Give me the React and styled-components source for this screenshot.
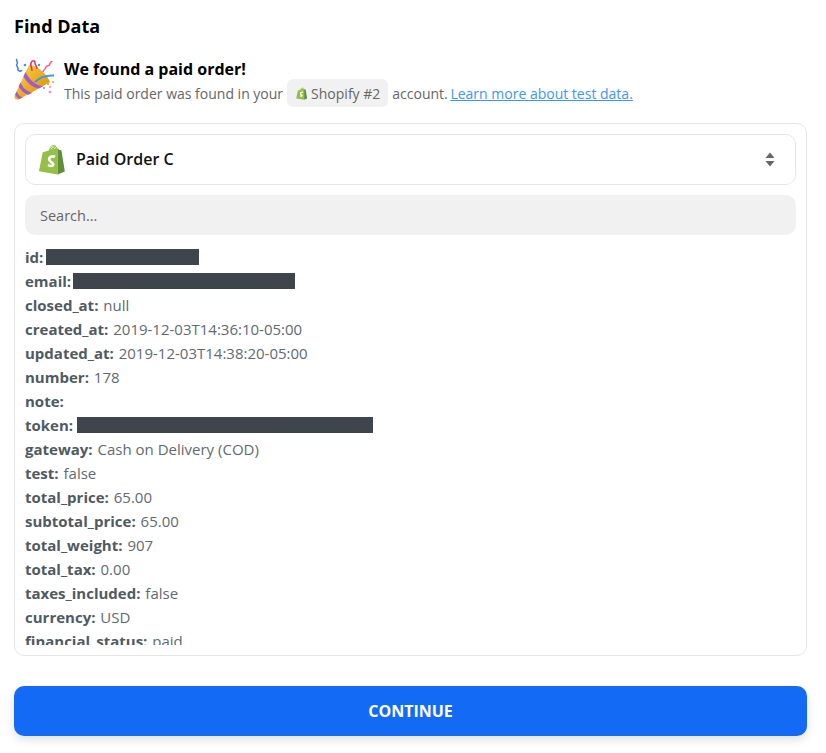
import * as React from "react";
import styled, { createGlobalStyle } from "styled-components";

const rows = [
  { key: "id", redact: 153, gap: 2 },
  { key: "email", redact: 222, gap: 1 },
  { key: "closed_at", value: "null" },
  { key: "created_at", value: "2019-12-03T14:36:10-05:00" },
  { key: "updated_at", value: "2019-12-03T14:38:20-05:00" },
  { key: "number", value: "178" },
  { key: "note", value: "" },
  { key: "token", redact: 296, gap: 3 },
  { key: "gateway", value: "Cash on Delivery (COD)" },
  { key: "test", value: "false" },
  { key: "total_price", value: "65.00" },
  { key: "subtotal_price", value: "65.00" },
  { key: "total_weight", value: "907" },
  { key: "total_tax", value: "0.00" },
  { key: "taxes_included", value: "false" },
  { key: "currency", value: "USD" },
  { key: "financial_status", value: "paid" },
];

function ShopifyBag({ size }) {
  return (
    <svg width={size} height={size} viewBox="0 0 28 32">
      <path d="M1 28 L5 8.5 C8 7.6 9.5 7 10.6 6.6 C11.6 3.4 13.6 1 16 1 C17.5 1 18.6 1.8 19.2 3.2 L20.5 4.6 L20.5 31.5 Z" fill="#95bf47" />
      <path d="M20.5 4.6 L22 6.2 L24.2 6.4 L27.8 28.4 L20.5 31.5 Z" fill="#5e8e3e" />
      <path d="M10.6 7 C11.4 4.2 13 2.4 15 2.2 M13.6 5.6 C14.4 3.8 15.6 2.8 17 3 M17 5 C17.6 4 18 3.6 18.8 3.8" fill="none" stroke="#fff" strokeWidth="0.9" />
      <path d="M17.6 13.2 C16 12.2 11.8 12.6 11.6 15.8 C11.4 18.8 16 18.8 15.8 21.2 C15.6 23 13 23.2 10.4 21.8" fill="none" stroke="#fff" strokeWidth="2.8" />
    </svg>
  );
}

function PartyPopper() {
  return (
    <svg width="42" height="42" viewBox="0 0 42 42">
      <defs>
        <linearGradient id="cone" x1="0" y1="0" x2="1" y2="1">
          <stop offset="0" stopColor="#ffd83f" />
          <stop offset="1" stopColor="#d5860a" />
        </linearGradient>
      </defs>
      <path d="M15 7 C22 6 34 17 36 24 C28 29 9 39 4.5 41.5 C1.5 42 0 40 0.6 37.5 Z" fill="url(#cone)" />
      <path d="M11.5 14 C15 21 21 27.5 29 28.3 L25 30.6 C18 29.5 12.5 24 9.4 18.5 Z" fill="#a35acb" />
      <path d="M6.5 24.5 C9 30 13 33.8 18.5 34.6 L14.5 36.8 C10 35.5 6.5 32 4.6 28.5 Z" fill="#a35acb" />
      <path d="M2.5 33.5 C4 36.5 6 38.6 8.6 39.6 L5.6 41 C3.6 40 2 38.2 1.2 36.4 Z" fill="#a35acb" />
      <path d="M21 24 C26 19 31 17 40 17.5" fill="none" stroke="#3c97e8" strokeWidth="2" />
      <path d="M18 13 C18 9 16 8 17 5 C18 2 21 2 21 5 C21 7 23 8 23 11" fill="none" stroke="#e8316f" strokeWidth="1.6" />
      <path d="M29 14 C29 11 32 12 32 9 C32 7 35 9 36 6 C36 4 38 4 38 3" fill="none" stroke="#f05a92" strokeWidth="1.5" />
      <path d="M3 1 C1 3 5 4 3 6 C1 8 5 9 4 11 C3 13 7 14 8 12" fill="none" stroke="#3c7fe8" strokeWidth="1.5" />
      <circle cx="11" cy="7" r="1.3" fill="#3c97e8" />
      <circle cx="25" cy="7" r="1.2" fill="#2f9ee8" />
      <circle cx="34" cy="26" r="1.2" fill="#f2a341" />
      <circle cx="39" cy="24" r="1.1" fill="#f2a341" />
      <circle cx="36" cy="29" r="1.2" fill="#f5a8c0" />
      <circle cx="36" cy="34" r="1.3" fill="#f58cb0" />
      <circle cx="30" cy="30" r="0.9" fill="#3c97e8" />
    </svg>
  );
}

function App() {
  return (
    <Page>
      <GlobalStyle />
      <Title>Find Data</Title>
      <Notice>
        <PopperSlot>
          <PartyPopper />
        </PopperSlot>
        <NoticeText>
          <NoticeHeading>We found a paid order!</NoticeHeading>
          <NoticeLine>
            This paid order was found in your
            <AccountPill>
              <ShopifyBag size={13} />
              Shopify #2
            </AccountPill>
            account. <LearnLink href="#">Learn more about test data.</LearnLink>
          </NoticeLine>
        </NoticeText>
      </Notice>
      <Card>
        <SelectBox>
          <ShopifyBag size={31} />
          <SelectLabel>Paid Order C</SelectLabel>
          <SortIcon width="10" height="15" viewBox="0 0 10 15">
            <path d="M5 0.5 L9.5 6 H0.5 Z M0.5 9 H9.5 L5 14.5 Z" fill="#666" />
          </SortIcon>
        </SelectBox>
        <SearchInput placeholder="Search..." />
        <Rows>
          {rows.map((row) => (
            <Row key={row.key}>
              <RowKey>{row.key}:</RowKey>
              {row.redact ? (
                <Redacted $width={row.redact} $gap={row.gap} />
              ) : (
                row.value && ` ${row.value}`
              )}
            </Row>
          ))}
        </Rows>
      </Card>
      <ContinueButton>CONTINUE</ContinueButton>
    </Page>
  );
}

const GlobalStyle = createGlobalStyle`
  html, body {
    margin: 0;
    background: #fff;
  }
  * {
    box-sizing: border-box;
  }
`;

const Page = styled.div`
  width: 826px;
  height: 753px;
  overflow: hidden;
  padding: 13px 19px 0 14px;
  font-family: "Open Sans", sans-serif;
`;

const Title = styled.h1`
  margin: 0;
  color: #000;
  font-size: 18px;
  font-weight: 700;
  line-height: 26px;
`;

const Notice = styled.div`
  display: flex;
  margin-top: 19px;
  height: 65px;
`;

const PopperSlot = styled.div`
  width: 50px;
  flex: none;
`;

const NoticeText = styled.div`
  padding-top: 1px;
`;

const NoticeHeading = styled.div`
  color: #000;
  font-size: 16px;
  font-weight: 700;
  line-height: 20px;
`;

const NoticeLine = styled.div`
  display: flex;
  align-items: center;
  height: 28px;
  color: #666;
  font-size: 14px;
  white-space: pre-wrap;
`;

const AccountPill = styled.span`
  display: inline-flex;
  align-items: center;
  gap: 3px;
  height: 28px;
  margin: 0 4px;
  padding: 0 8px;
  background: #f1f1f1;
  border-radius: 6px;
`;

const LearnLink = styled.a`
  margin-left: -1px;
  color: #3d95f5;
  text-decoration: underline;
`;

const Card = styled.div`
  display: flex;
  flex-direction: column;
  height: 533px;
  padding: 10px;
  border: 1px solid #e6e6e6;
  border-radius: 10px;
`;

const SelectBox = styled.div`
  display: flex;
  flex: none;
  align-items: center;
  height: 51px;
  padding: 0 20px 0 10px;
  border: 1px solid #e6e6e6;
  border-radius: 10px;
`;

const SelectLabel = styled.span`
  flex: 1;
  margin-left: 9px;
  padding-bottom: 2px;
  color: #111;
  font-size: 16px;
  font-weight: 600;
`;

const SortIcon = styled.svg`
  flex: none;
`;

const SearchInput = styled.input`
  flex: none;
  height: 40px;
  margin-top: 10px;
  padding: 0 15px;
  background: #f1f1f1;
  border: none;
  border-radius: 10px;
  color: #666;
  font-family: inherit;
  font-size: 14.5px;
  outline: none;
  &::placeholder {
    color: #666;
    opacity: 1;
  }
`;

const Rows = styled.div`
  flex: 1;
  min-height: 0;
  margin-top: 10px;
  overflow: hidden;
`;

const Row = styled.div`
  display: flex;
  height: 24px;
  color: #5f6a72;
  font-size: 15px;
  line-height: 24px;
  white-space: pre;
`;

const RowKey = styled.span`
  margin-right: 1px;
  color: #4f5a62;
  font-weight: 700;
`;

const Redacted = styled.span`
  align-self: center;
  flex: none;
  width: ${(p) => p.$width}px;
  height: 16px;
  margin-left: ${(p) => p.$gap}px;
  background: #3f454d;
`;

const ContinueButton = styled.button`
  display: block;
  width: 100%;
  height: 50px;
  margin-top: 30px;
  background: #136bf5;
  border: none;
  border-radius: 10px;
  box-shadow: 0 4px 10px rgba(0, 0, 0, 0.12);
  color: #fff;
  font-family: inherit;
  font-size: 16px;
  font-weight: 700;
`;

export default App;
